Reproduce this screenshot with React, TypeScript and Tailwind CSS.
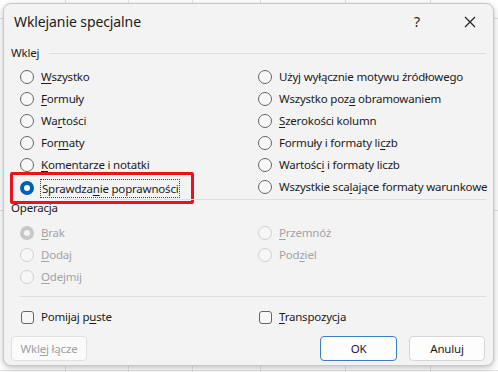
import React from "react";

type Opt = { pre: string; key: string; post: string; checked?: boolean; focus?: boolean };

const pasteLeft: Opt[] = [
  { pre: "", key: "W", post: "szystko" },
  { pre: "", key: "F", post: "ormuły" },
  { pre: "Wa", key: "r", post: "tości" },
  { pre: "For", key: "m", post: "aty" },
  { pre: "", key: "K", post: "omentarze i notatki" },
  { pre: "Sprawdza", key: "n", post: "ie poprawności", checked: true, focus: true },
];

const pasteRight: Opt[] = [
  { pre: "Uży", key: "j", post: " wyłącznie motywu źródłowego" },
  { pre: "Wszystko poz", key: "a", post: " obramowaniem" },
  { pre: "", key: "S", post: "zerokości kolumn" },
  { pre: "Formuły i formaty li", key: "c", post: "zb" },
  { pre: "Wartośc", key: "i", post: " i formaty liczb" },
  { pre: "Wszystkie sca", key: "l", post: "ające formaty warunkowe" },
];

const opLeft: Opt[] = [
  { pre: "", key: "B", post: "rak", checked: true },
  { pre: "", key: "D", post: "odaj" },
  { pre: "", key: "O", post: "dejmij" },
];

const opRight: Opt[] = [
  { pre: "", key: "P", post: "rzemnóż" },
  { pre: "Pod", key: "z", post: "iel" },
];

function Label({ o }: { o: Opt }) {
  return (
    <span className="whitespace-nowrap">
      {o.pre}
      <span className="underline underline-offset-2">{o.key}</span>
      {o.post}
    </span>
  );
}

function Radio({ o, disabled }: { o: Opt; disabled?: boolean }) {
  return (
    <div className="flex h-[22px] items-center gap-[7px] whitespace-nowrap">
      {o.checked && !disabled ? (
        <span className="flex h-[14px] w-[14px] shrink-0 items-center justify-center rounded-full bg-[#005fb8]">
          <span className="h-[6px] w-[6px] rounded-full bg-white" />
        </span>
      ) : o.checked && disabled ? (
        <span className="flex h-[14px] w-[14px] shrink-0 items-center justify-center rounded-full bg-[#c8c8c8]">
          <span className="h-[6px] w-[6px] rounded-full bg-[#f3f3f3]" />
        </span>
      ) : (
        <span
          className={
            disabled
              ? "h-[14px] w-[14px] shrink-0 rounded-full border border-[#d0d0d0] bg-[#f7f7f7]"
              : "h-[14px] w-[14px] shrink-0 rounded-full border border-[#666666] bg-[#f7f7f7]"
          }
        />
      )}
      <span
        className={
          o.focus
            ? "-ml-[1px] border border-dotted border-[#444] px-[1px] leading-[17px]"
            : disabled
            ? "text-[#a3a3a3]"
            : ""
        }
      >
        <Label o={o} />
      </span>
    </div>
  );
}

export default function App() {
  return (
    <div
      className="relative h-[372px] w-[498px] overflow-hidden bg-white p-[3px] text-[11.5px] leading-[16px] tracking-[-0.2px] text-[#1b1b1b]"
      style={{ fontFamily: '"Noto Sans", "Open Sans", sans-serif' }}
    >
      {/* spreadsheet gridlines behind the dialog */}
      <div className="absolute inset-0">
        {[65, 128, 192, 260, 345, 430].map((x) => (
          <div key={x} className="absolute top-0 h-full w-px bg-[#e1e1e1]" style={{ left: x }} />
        ))}
        {[18, 210, 370].map((y) => (
          <div key={y} className="absolute left-0 h-px w-full bg-[#e1e1e1]" style={{ top: y }} />
        ))}
      </div>

      <div className="relative flex h-[363px] w-[491px] flex-col rounded-[8px] border border-[#c8c8c8] bg-[#f3f3f3] shadow-[0_2px_6px_rgba(0,0,0,0.25)]">
        {/* title bar */}
        <div className="flex h-[36px] items-center pl-[10px] pr-[17px]">
          <span className="flex-1 text-[14px] tracking-[-0.1px]">Wklejanie specjalne</span>
          <span className="mr-[44px] text-[14px]">?</span>
          <svg viewBox="0 0 12 12" className="h-[12px] w-[12px]" aria-hidden>
            <path d="M1 1L11 11M11 1L1 11" stroke="#222" strokeWidth="1.2" />
          </svg>
        </div>

        <div className="flex flex-1 flex-col px-[7px] pt-[5px]">
          <div className="flex items-center gap-[10px]">
            <span>Wklej</span>
            <span className="h-px flex-1 bg-[#dedede]" />
          </div>

          <div className="mt-[5px] grid grid-cols-[238px_1fr] pl-[9px]">
            <div className="flex flex-col">
              {pasteLeft.map((o) =>
                o.focus ? (
                  <div
                    key={o.key}
                    className="-mb-[4px] -ml-[10px] -mt-[4px] w-[184px] rounded-[2px] border-[3px] border-[#e8141b] py-[2px] pl-[7px]"
                  >
                    <Radio o={o} />
                  </div>
                ) : (
                  <Radio key={o.key} o={o} />
                )
              )}
            </div>
            <div className="flex flex-col">
              {pasteRight.map((o) => (
                <Radio key={o.key} o={o} />
              ))}
            </div>
          </div>

          <div className="mt-0 flex items-start gap-[6px]">
            <span>Operacja</span>
            <span className="mt-[-1px] h-px flex-1 bg-[#dedede]" />
          </div>

          <div className="mt-[6px] grid grid-cols-[238px_1fr] pl-[9px]">
            <div className="flex flex-col">
              {opLeft.map((o) => (
                <Radio key={o.key} o={o} disabled />
              ))}
            </div>
            <div className="flex flex-col">
              {opRight.map((o) => (
                <Radio key={o.key} o={o} disabled />
              ))}
            </div>
          </div>

          <div className="ml-[9px] mt-[8px] h-px bg-[#dedede]" />

          <div className="mt-[12px] grid grid-cols-[238px_1fr] pl-[10px]">
            <div className="flex items-center gap-[7px]">
              <span className="h-[13px] w-[13px] rounded-[3px] border border-[#666] bg-[#f7f7f7]" />
              <span>
                Pomijaj p<span className="underline underline-offset-2">u</span>ste
              </span>
            </div>
            <div className="flex items-center gap-[7px]">
              <span className="h-[13px] w-[13px] rounded-[3px] border border-[#666] bg-[#f7f7f7]" />
              <span>
                <span className="underline underline-offset-2">T</span>ranspozycja
              </span>
            </div>
          </div>

          <div className="mt-[11px] flex items-center">
            <button className="flex h-[25px] w-[76px] items-center justify-center rounded-[4px] border border-[#e0e0e0] bg-[#fbfbfb] text-[#a0a0a0]">
              Wkl<span className="underline underline-offset-2">e</span>j łącze
            </button>
            <button className="ml-auto flex h-[25px] w-[77px] items-center justify-center rounded-[4px] border border-[#3a7fc4] bg-[#fdfdfd]">
              OK
            </button>
            <button className="ml-[12px] mr-[1px] flex h-[25px] w-[76px] items-center justify-center rounded-[4px] border border-[#d6d6d6] bg-[#fdfdfd]">
              Anuluj
            </button>
          </div>
        </div>
      </div>
    </div>
  );
}
